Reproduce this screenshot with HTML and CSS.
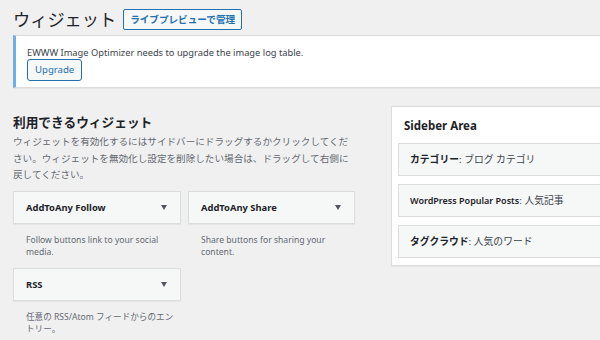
FILE: index.html
```html
<!DOCTYPE html>
<html lang="ja">
<head>
<meta charset="utf-8">
<title>ウィジェット</title>
<link rel="stylesheet" href="styles.css">
</head>
<body>
<div class="wrap">
  <div class="page-head">
    <h1 class="page-title">ウィジェット</h1>
    <a class="btn-outline">ライブプレビューで管理</a>
  </div>

  <div class="notice">
    <p class="notice-text">EWWW Image Optimizer needs to upgrade the image log table.</p>
    <button class="btn-small">Upgrade</button>
  </div>

  <div class="cols">
    <div class="available">
      <h2 class="section-title">利用できるウィジェット</h2>
      <p class="section-desc">ウィジェットを有効化するにはサイドバーにドラッグするかクリックしてください。ウィジェットを無効化し設定を削除したい場合は、ドラッグして右側に戻してください。</p>
      <div class="widget-grid">
        <div class="widget">
          <div class="widget-top"><span class="widget-name">AddToAny Follow</span><span class="arrow"></span></div>
          <p class="widget-desc">Follow buttons link to your social media.</p>
        </div>
        <div class="widget">
          <div class="widget-top"><span class="widget-name">AddToAny Share</span><span class="arrow"></span></div>
          <p class="widget-desc">Share buttons for sharing your content.</p>
        </div>
        <div class="widget">
          <div class="widget-top"><span class="widget-name">RSS</span><span class="arrow"></span></div>
          <p class="widget-desc">任意の RSS/Atom フィードからのエントリー。</p>
        </div>
      </div>
    </div>

    <div class="sidebar">
      <h3 class="sidebar-title">Sideber Area</h3>
      <div class="sidebar-items">
        <div class="sb-item"><span class="sb-name">カテゴリー</span>: ブログ カテゴリ</div>
        <div class="sb-item"><span class="sb-name sb-latin">WordPress Popular Posts</span>: 人気記事</div>
        <div class="sb-item"><span class="sb-name">タグクラウド</span>: 人気のワード</div>
      </div>
    </div>
  </div>
</div>
</body>
</html>
```

FILE: styles.css
```css
html, body {
  margin: 0;
  padding: 0;
  background: #f0f0f1;
  overflow: hidden;
}
body {
  font-family: "Noto Sans", "Noto Sans CJK JP", sans-serif;
  color: #3c434a;
}
.wrap {
  width: 640px;
  padding-left: 13px;
}
.page-head {
  display: flex;
  align-items: center;
  gap: 7px;
  padding-top: 9px;
  height: 21px;
}
.page-title {
  margin: 0;
  font-size: 17.2px;
  font-weight: 400;
  line-height: 21px;
  color: #1d2327;
}
.btn-outline {
  display: inline-block;
  box-sizing: border-box;
  height: 21px;
  padding: 0 6px;
  border: 1px solid #2271b1;
  border-radius: 2px;
  background: #f6f7f7;
  color: #2271b1;
  font-size: 9.6px;
  font-weight: 600;
  line-height: 19px;
}
.notice {
  margin-top: 5px;
  background: #fff;
  border: 1px solid #dcdcde;
  border-left: 3px solid #72aee6;
  box-shadow: 0 1px 1px rgba(0,0,0,0.04);
  padding: 10px 11px 6px;
}
.notice-text {
  margin: 0;
  font-size: 9.3px;
  line-height: 13px;
  color: #3c434a;
}
.btn-small {
  display: block;
  box-sizing: border-box;
  height: 22px;
  padding: 0 7px;
  border: 1px solid #2271b1;
  border-radius: 3px;
  background: #f6f7f7;
  color: #2271b1;
  font-family: inherit;
  font-size: 9.6px;
  line-height: 20px;
}
.cols {
  display: flex;
  gap: 36px;
  margin-top: 18px;
  align-items: flex-start;
}
.available {
  width: 342px;
}
.section-title {
  margin: 7px 0 3px;
  font-size: 12.7px;
  font-weight: 700;
  line-height: 18px;
  color: #1d2327;
}
.section-desc {
  margin: 0;
  font-size: 9.6px;
  line-height: 16.5px;
  color: #646970;
}
.widget-grid {
  display: grid;
  grid-template-columns: 168px 167px;
  column-gap: 7px;
  row-gap: 9px;
  margin-top: 7px;
}
.widget-top {
  display: flex;
  align-items: center;
  justify-content: space-between;
  height: 31px;
  padding: 0 13px 0 12px;
  background: #f6f7f7;
  border: 1px solid #dcdcde;
  box-shadow: 0 1px 1px rgba(0,0,0,0.04);
}
.widget-name {
  font-size: 9.4px;
  font-weight: 700;
  color: #1d2327;
}
.arrow {
  width: 0;
  height: 0;
  border-left: 3px solid transparent;
  border-right: 3px solid transparent;
  border-top: 5px solid #50575e;
}
.widget-desc {
  margin: 10px 0 0;
  padding: 0 0 0 13px;
  font-size: 8.6px;
  line-height: 12.5px;
  color: #646970;
}
.sidebar {
  width: 240px;
  background: #fff;
  border: 1px solid #dcdcde;
  box-shadow: 0 1px 1px rgba(0,0,0,0.04);
  padding-bottom: 7px;
}
.sidebar-title {
  margin: 0;
  padding: 10px 12px 8px;
  font-size: 11.5px;
  font-weight: 700;
  line-height: 18px;
  color: #1d2327;
}
.sidebar-items {
  display: flex;
  flex-direction: column;
  gap: 8px;
  padding-left: 6px;
}
.sb-item {
  height: 31px;
  padding-left: 11px;
  background: #f6f7f7;
  border: 1px solid #dcdcde;
  font-size: 9.8px;
  line-height: 31px;
  color: #3c434a;
}
.sb-name {
  font-weight: 700;
  color: #1d2327;
}
.sb-latin {
  font-size: 9px;
  font-weight: 600;
}
```
